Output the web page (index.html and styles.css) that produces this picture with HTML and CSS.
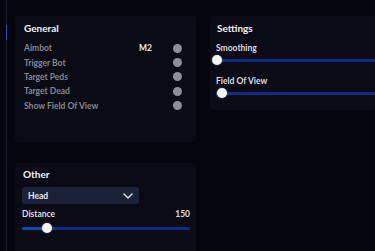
FILE: index.html
```html
<!DOCTYPE html>
<html lang="en">
<head>
    <meta charset="UTF-8">
    <meta name="viewport" content="width=device-width, initial-scale=1.0">
    <link rel="stylesheet" href="styles.css">
</head>
<body>
    <div class="menu">
        <div class="rail">
            <div class="rail-accent"></div>
        </div>
        <div class="col-left">
            <div class="panel general">
                <p class="panel-title">General</p>
                <div class="opt-list">
                    <div class="opt"><span class="opt-name">Aimbot</span><span class="opt-key">M2</span><span class="toggle"></span></div>
                    <div class="opt"><span class="opt-name">Trigger Bot</span><span class="toggle"></span></div>
                    <div class="opt"><span class="opt-name">Target Peds</span><span class="toggle"></span></div>
                    <div class="opt"><span class="opt-name">Target Dead</span><span class="toggle"></span></div>
                    <div class="opt"><span class="opt-name">Show Field Of View</span><span class="toggle"></span></div>
                </div>
            </div>
            <div class="panel other">
                <p class="panel-title">Other</p>
                <div class="select">
                    <span>Head</span>
                    <svg width="10" height="6" viewBox="0 0 10 6"><path d="M1 1 L5 5 L9 1" fill="none" stroke="#e6e8f0" stroke-width="1.4" stroke-linecap="round" stroke-linejoin="round"/></svg>
                </div>
                <div class="slider-head">
                    <span class="slider-label">Distance</span>
                    <span class="slider-value">150</span>
                </div>
                <div class="track">
                    <div class="fill" style="width: 25px"></div>
                    <div class="thumb" style="left: 25px"></div>
                </div>
            </div>
        </div>
        <div class="col-right">
            <div class="panel settings">
                <p class="panel-title">Settings</p>
                <p class="slider-label">Smoothing</p>
                <div class="track">
                    <div class="fill" style="width: 1px"></div>
                    <div class="thumb" style="left: 1px"></div>
                </div>
                <p class="slider-label">Field Of View</p>
                <div class="track">
                    <div class="fill" style="width: 6px"></div>
                    <div class="thumb" style="left: 6px"></div>
                </div>
            </div>
        </div>
    </div>
</body>
</html>
```

FILE: styles.css
```css
html, body {
    margin: 0;
    height: 100%;
    background-color: #05050e;
    overflow: hidden;
}

.menu * {
    font-family: 'Lato', 'Noto Sans', sans-serif;
    box-sizing: border-box;
}

.menu {
    display: flex;
    align-items: flex-start;
    height: 251px;
}

.rail {
    flex: none;
    width: 1px;
    height: 100%;
    margin-left: 6px;
    margin-right: 8px;
    background-color: #181826;
}

.rail-accent {
    margin-top: 25px;
    height: 15px;
    background-color: #2a4fb8;
}

.col-left {
    flex: none;
    width: 181px;
    margin-top: 16px;
    display: flex;
    flex-direction: column;
    gap: 21px;
}

.col-right {
    flex: none;
    width: 200px;
    margin-top: 16px;
    margin-left: 14px;
}

.panel {
    background-color: #0b0b16;
    border-radius: 4px;
}

.panel-title {
    margin: 0;
    color: #f2f2f6;
    font-size: 10px;
    font-weight: bold;
    line-height: 12px;
}

.general {
    height: 126px;
    padding: 6px 0 0 9px;
}

.opt-list {
    margin-top: 7px;
    padding-right: 14px;
}

.opt {
    display: flex;
    align-items: center;
    height: 14.4px;
}

.opt-name {
    flex: 1;
    color: #868692;
    font-size: 8.5px;
    font-weight: bold;
}

.opt-key {
    color: #e8e8ee;
    font-size: 8.5px;
    font-weight: bold;
    margin-right: 21px;
}

.toggle {
    width: 9px;
    height: 9px;
    border-radius: 50%;
    background-color: #8e8e98;
}

.other {
    height: 100px;
    padding: 5px 6px 0 7px;
}

.other .panel-title {
    margin-left: 1px;
}

.select {
    display: flex;
    align-items: center;
    justify-content: space-between;
    width: 117px;
    height: 17px;
    margin-top: 7px;
    padding: 0 6px 0 6px;
    background-color: #1b2238;
    border-radius: 3px;
    color: #e8e8f0;
    font-size: 8.5px;
    font-weight: bold;
}

.slider-head {
    display: flex;
    justify-content: space-between;
    margin-top: 5px;
}

.slider-label {
    margin: 0;
    color: #dcdce4;
    font-size: 8.5px;
    font-weight: bold;
    line-height: 10px;
}

.slider-value {
    color: #dcdce4;
    font-size: 8.5px;
    font-weight: bold;
}

.track {
    position: relative;
    height: 3px;
    background-color: #0f2c8c;
    border-radius: 2px;
}

.fill {
    height: 100%;
    background-color: #1d45b0;
    border-radius: 2px;
}

.thumb {
    position: absolute;
    top: -4px;
    width: 10px;
    height: 10px;
    margin-left: -5px;
    border-radius: 50%;
    background-color: #f4f4f6;
    box-shadow: 0 0 2px rgba(255, 255, 255, 0.4);
}

.settings {
    height: 94px;
    padding: 6px 0 0 6px;
}

.settings .panel-title {
    margin-left: 1px;
    margin-bottom: 9px;
}

.settings .track {
    margin-top: 6px;
    margin-bottom: 14px;
}

.other .track {
    margin-top: 8px;
}
```
